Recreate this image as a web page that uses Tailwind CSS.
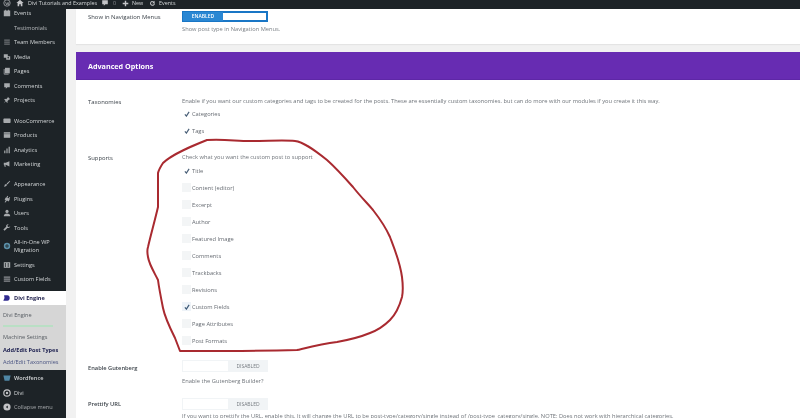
<!DOCTYPE html>
<html>
<head>
<meta charset="utf-8">
<script src="https://cdn.jsdelivr.net/npm/@tailwindcss/browser@4"></script>
</head>
<body class="m-0 bg-[#f1f1f1]">
<div class="relative w-[800px] h-[418px] overflow-hidden flex flex-col font-['Open_Sans',sans-serif] blur-[0.45px] bg-[#f1f1f1]">
  <!-- Top bar -->
  <header class="relative z-10 h-[9px] shrink-0 bg-[#1d2327] text-[#d5d8da] text-[5.4px] font-medium flex items-center pb-[3px] pl-[3px] overflow-hidden">
    <svg class="w-[8px] h-[8px] mr-[5px] shrink-0" viewBox="0 0 20 20"><circle cx="10" cy="10" r="8" fill="none" stroke="#a7aaad" stroke-width="2"/><path d="M6 7l3 8 2-6 2 6 2-8" fill="none" stroke="#a7aaad" stroke-width="1.6"/></svg>
    <svg class="w-[8px] h-[8px] mr-[4px] shrink-0" viewBox="0 0 20 20"><path d="M10 2L1 10h3v8h4v-5h4v5h4v-8h3z" fill="#c3c4c7"/></svg>
    <span class="w-[73px] shrink-0 whitespace-nowrap">Divi Tutorials and Examples</span>
    <svg class="w-[8px] h-[8px] mr-[4px] shrink-0" viewBox="0 0 20 20"><path d="M3 3h14v10h-6l-4 4v-4H3z" fill="#c3c4c7"/></svg>
    <span class="w-[9px] shrink-0 text-[#8c8f94]">0</span>
    <svg class="w-[7px] h-[7px] mr-[3px] shrink-0" viewBox="0 0 20 20"><path d="M8 2h4v6h6v4h-6v6H8v-6H2V8h6z" fill="#c3c4c7"/></svg>
    <span class="w-[17px] shrink-0">New</span>
    <svg class="w-[7px] h-[7px] mr-[3px] shrink-0" viewBox="0 0 20 20"><path d="M17 10a7 7 0 1 1-3-6l2-2v7h-7l3-3a4 4 0 1 0 2 4z" fill="#c3c4c7"/></svg>
    <span class="shrink-0">Events</span>
  </header>

  <div class="flex flex-1 min-h-0">
    <!-- Sidebar -->
    <aside class="relative w-[66px] shrink-0 bg-[#1d2327] text-[#d3d6d8] text-[5.6px] leading-[8px]">
      <div class="-mt-[3px] flex flex-col">
        <a class="h-[14.5px] flex items-center gap-[3px] pl-[3px]"><svg class="w-[8px] h-[8px]" viewBox="0 0 20 20"><path d="M2 4h16v14H2zM5 2h2v4H5zM13 2h2v4h-2z" fill="#a7aaad"/></svg><span>Events</span></a>
        <a class="h-[14.5px] flex items-center pl-[14px] text-[#b9bcbf]">Testimonials</a>
        <a class="h-[14.5px] flex items-center gap-[3px] pl-[3px]"><svg class="w-[8px] h-[8px]" viewBox="0 0 20 20"><path d="M3 4h14v3H3zM3 9h14v3H3zM3 14h14v3H3z" fill="#6d7175"/></svg><span>Team Members</span></a>
        <a class="h-[14.5px] flex items-center gap-[3px] pl-[3px]"><svg class="w-[8px] h-[8px]" viewBox="0 0 20 20"><path d="M2 3h10v9H2zM8 8h10v9H8z" fill="#a7aaad"/><circle cx="13" cy="12" r="2" fill="#1d2327"/></svg><span>Media</span></a>
        <a class="h-[14.5px] flex items-center gap-[3px] pl-[3px]"><svg class="w-[8px] h-[8px]" viewBox="0 0 20 20"><path d="M5 2h12v14H5z" fill="#a7aaad"/><path d="M3 5v13h11" fill="none" stroke="#a7aaad" stroke-width="2"/></svg><span>Pages</span></a>
        <a class="h-[14.5px] flex items-center gap-[3px] pl-[3px]"><svg class="w-[8px] h-[8px]" viewBox="0 0 20 20"><path d="M3 3h14v10h-6l-4 4v-4H3z" fill="#a7aaad"/></svg><span>Comments</span></a>
        <a class="h-[14.5px] flex items-center gap-[3px] pl-[3px]"><svg class="w-[8px] h-[8px]" viewBox="0 0 20 20"><path d="M12 2l6 6-3 1-4 4 1 3-2 1-3-4-5 5 4-6-3-3 2-2 3 1 4-4z" fill="#a7aaad"/></svg><span>Projects</span></a>

        <a class="mt-[6px] h-[14.5px] flex items-center gap-[3px] pl-[3px]"><svg class="w-[8px] h-[8px]" viewBox="0 0 20 20"><rect x="1" y="4" width="18" height="11" rx="2" fill="#a7aaad"/></svg><span>WooCommerce</span></a>
        <a class="h-[14.5px] flex items-center gap-[3px] pl-[3px]"><svg class="w-[8px] h-[8px]" viewBox="0 0 20 20"><path d="M2 3h16v14H2z" fill="#a7aaad"/><path d="M2 7h16" stroke="#1d2327"/></svg><span>Products</span></a>
        <a class="h-[14.5px] flex items-center gap-[3px] pl-[3px]"><svg class="w-[8px] h-[8px]" viewBox="0 0 20 20"><path d="M3 11h3v7H3zM8.500 6h3v12h-3zM14 2h3v16h-3z" fill="#a7aaad"/></svg><span>Analytics</span></a>
        <a class="h-[14.5px] flex items-center gap-[3px] pl-[3px]"><svg class="w-[8px] h-[8px]" viewBox="0 0 20 20"><path d="M2 7h5l9-4v13l-9-4H6l1 5H4l-1-5H2z" fill="#a7aaad"/></svg><span>Marketing</span></a>

        <a class="mt-[5.5px] h-[14.5px] flex items-center gap-[3px] pl-[3px]"><svg class="w-[8px] h-[8px]" viewBox="0 0 20 20"><path d="M17 2l1 1-7 8-2-2zM8 10l2 2c-1 4-5 5-8 5 2-1 2-3 2-4s2-3 4-3z" fill="#a7aaad"/></svg><span>Appearance</span></a>
        <a class="h-[14.5px] flex items-center gap-[3px] pl-[3px]"><svg class="w-[8px] h-[8px]" viewBox="0 0 20 20"><path d="M11 2l2 1-2 4 3 1 2-3 2 1-2 4 1 1-3 5-4-2-4 5-2-1 3-5-3-2 3-5 1 1z" fill="#a7aaad"/></svg><span>Plugins</span></a>
        <a class="h-[14.5px] flex items-center gap-[3px] pl-[3px]"><svg class="w-[8px] h-[8px]" viewBox="0 0 20 20"><circle cx="10" cy="6" r="4" fill="#a7aaad"/><path d="M2 18c0-5 3-7 8-7s8 2 8 7z" fill="#a7aaad"/></svg><span>Users</span></a>
        <a class="h-[14.5px] flex items-center gap-[3px] pl-[3px]"><svg class="w-[8px] h-[8px]" viewBox="0 0 20 20"><path d="M18 5l-3 3-3-1-1-3 3-3c-4-1-7 2-6 6l-7 7 3 3 7-7c4 1 7-2 7-5z" fill="#a7aaad"/></svg><span>Tools</span></a>
        <a class="h-[22px] flex items-center gap-[3px] pl-[3px]"><svg class="w-[8px] h-[8px] shrink-0" viewBox="0 0 20 20"><circle cx="10" cy="10" r="8" fill="#5b8fa8"/><path d="M5 10h10M10 5v10" stroke="#1d2327" stroke-width="2"/></svg><span>All-in-One WP<br>Migration</span></a>
        <a class="h-[15px] flex items-center gap-[3px] pl-[3px]"><svg class="w-[8px] h-[8px]" viewBox="0 0 20 20"><path d="M2 3h16v14H2z" fill="#a7aaad"/><path d="M6 5v10M13 5v10" stroke="#1d2327" stroke-width="2"/></svg><span>Settings</span></a>
        <a class="h-[14.500px] flex items-center gap-[3px] pl-[3px]"><svg class="w-[8px] h-[8px]" viewBox="0 0 20 20"><path d="M2 4h16v3H2zM2 9h16v3H2zM2 14h16v3H2z" fill="#8c8f94"/></svg><span>Custom Fields</span></a>

        <a class="mt-[4.5px] h-[14px] bg-white text-[#23244f] font-bold flex items-center gap-[3px] pl-[2px]"><svg class="w-[9px] h-[8px]" viewBox="0 0 20 20"><path d="M4 3h8c4 0 6 3 6 7s-2 7-6 7H2l3-7z" fill="#2f2a8f"/></svg><span>Divi Engine</span></a>
        <div class="h-[65px] bg-[#d6d6d6] text-[#555a60] flex flex-col pl-[3px]">
          <span class="mt-[6px] h-[8px]">Divi Engine</span>
          <span class="mt-[6px] h-[2px] w-[50px] bg-[#b9dfc4]"></span>
          <span class="mt-[6px] h-[8px]">Machine Settings</span>
          <span class="mt-[5px] h-[8px] font-bold text-[#1c1f4f]">Add/Edit Post Types</span>
          <span class="mt-[4px] h-[8px] text-[#4a5482]">Add/Edit Taxonomies</span>
        </div>
        <a class="mt-[1px] h-[14.5px] flex items-center gap-[3px] pl-[3px] font-semibold"><svg class="w-[8px] h-[8px]" viewBox="0 0 20 20"><path d="M1 4h18l-3 13H4z" fill="#4f87a6"/></svg><span>Wordfence</span></a>
        <a class="h-[14.5px] flex items-center gap-[3px] pl-[3px]"><svg class="w-[8px] h-[8px]" viewBox="0 0 20 20"><circle cx="10" cy="10" r="8" fill="none" stroke="#c3c4c7" stroke-width="3"/><circle cx="10" cy="10" r="3" fill="#c3c4c7"/></svg><span>Divi</span></a>
        <a class="h-[14.5px] flex items-center gap-[3px] pl-[3px] text-[#a7aaad]"><svg class="w-[8px] h-[8px]" viewBox="0 0 20 20"><circle cx="10" cy="10" r="9" fill="#c3c4c7"/><path d="M12 6l-5 4 5 4z" fill="#1d2327"/></svg><span>Collapse menu</span></a>
      </div>
    </aside>

    <!-- Main -->
    <main class="flex-1 min-w-0 pl-[10px] text-[#666b72] text-[5.72px] leading-[8px]">
      <section class="h-[35px] bg-white shadow-[0_1px_1px_rgba(0,0,0,0.05)] pl-[12px] grid grid-cols-[94px_1fr]">
        <div class="pt-[4px] text-[5.9px] text-[#3c434a]">Show in Navigation Menus</div>
        <div class="pt-[2px]">
          <div class="w-[86px] h-[11px] border border-[#1976c5] bg-white flex">
            <span class="w-[40px] bg-[#2a87d3] text-white text-[5px] font-semibold leading-[9px] text-center">ENABLED</span>
            <span class="flex-1 border-y border-r border-[#1976c5]"></span>
          </div>
          <p class="mt-[3px] text-[#7b8086]">Show post type in Navigation Menus.</p>
        </div>
      </section>

      <section class="mt-[8px] bg-white">
        <h2 class="h-[28px] bg-[#672cb2] border-b border-[#5e27a6] text-white text-[7.2px] font-bold flex items-center pl-[12px]">Advanced Options</h2>

        <div class="pl-[12px] grid grid-cols-[94px_1fr]">
          <div class="pt-[18px] text-[5.9px] text-[#3c434a]">Taxonomies</div>
          <div class="pt-[17px]">
            <p class="text-[#6f747a] whitespace-nowrap">Enable if you want our custom categories and tags to be created for the posts. These are essentially custom taxonomies. but can do more with our modules if you create it this way.</p>
            <div class="flex flex-col">
              <label class="h-[17px] flex items-center gap-[1px]"><span class="w-[9px] h-[9px] flex items-center justify-center"><svg class="w-[6px] h-[6px]" viewBox="0 0 20 20"><path d="M3 11l5 6L17 3" fill="none" stroke="#4a6078" stroke-width="4"/></svg></span>Categories</label>
              <label class="h-[17px] flex items-center gap-[1px]"><span class="w-[9px] h-[9px] flex items-center justify-center"><svg class="w-[6px] h-[6px]" viewBox="0 0 20 20"><path d="M3 11l5 6L17 3" fill="none" stroke="#4a6078" stroke-width="4"/></svg></span>Tags</label>
            </div>
          </div>

          <div class="pt-[15px] text-[5.9px] text-[#3c434a]">Supports</div>
          <div class="pt-[14px]">
            <p class="text-[#6f747a]">Check what you want the custom post to support</p>
            <div class="mt-[1px] flex flex-col">
              <label class="h-[17px] flex items-center gap-[1px]"><span class="w-[9px] h-[9px] flex items-center justify-center"><svg class="w-[6px] h-[6px]" viewBox="0 0 20 20"><path d="M3 11l5 6L17 3" fill="none" stroke="#4a6078" stroke-width="4"/></svg></span>Title</label>
              <label class="h-[17px] flex items-center gap-[1px]"><span class="w-[9px] h-[9px] bg-[#f3f5f6]"></span>Content (editor)</label>
              <label class="h-[17px] flex items-center gap-[1px]"><span class="w-[9px] h-[9px] bg-[#f3f5f6]"></span>Excerpt</label>
              <label class="h-[17px] flex items-center gap-[1px]"><span class="w-[9px] h-[9px] bg-[#f3f5f6]"></span>Author</label>
              <label class="h-[17px] flex items-center gap-[1px]"><span class="w-[9px] h-[9px] bg-[#f3f5f6]"></span>Featured Image</label>
              <label class="h-[17px] flex items-center gap-[1px]"><span class="w-[9px] h-[9px] bg-[#f3f5f6]"></span>Comments</label>
              <label class="h-[17px] flex items-center gap-[1px]"><span class="w-[9px] h-[9px] bg-[#f3f5f6]"></span>Trackbacks</label>
              <label class="h-[17px] flex items-center gap-[1px]"><span class="w-[9px] h-[9px] bg-[#f3f5f6]"></span>Revisions</label>
              <label class="h-[17px] flex items-center gap-[1px]"><span class="w-[9px] h-[9px] bg-[#eef3f8] flex items-center justify-center"><svg class="w-[6px] h-[6px]" viewBox="0 0 20 20"><path d="M3 11l5 6L17 3" fill="none" stroke="#3d5a78" stroke-width="4"/></svg></span>Custom Fields</label>
              <label class="h-[17px] flex items-center gap-[1px]"><span class="w-[9px] h-[9px] bg-[#f3f5f6]"></span>Page Attributes</label>
              <label class="h-[17px] flex items-center gap-[1px]"><span class="w-[9px] h-[9px] bg-[#f3f5f6]"></span>Post Formats</label>
            </div>
          </div>

          <div class="pt-[15px] font-semibold text-[#3c434a]">Enable Gutenberg</div>
          <div class="pt-[11px]">
            <div class="w-[86px] h-[12px] bg-[#f1f4f6] flex items-center"><span class="ml-[1px] w-[45px] h-[10px] bg-white"></span><span class="flex-1 text-center text-[5px] text-[#777c82]">DISABLED</span></div>
            <p class="mt-[5px] text-[#6f747a]">Enable the Gutenberg Builder?</p>
          </div>

          <div class="pt-[15px] font-semibold text-[#3c434a]">Prettify URL</div>
          <div class="pt-[13px]">
            <div class="w-[86px] h-[12px] bg-[#f1f4f6] flex items-center"><span class="ml-[1px] w-[45px] h-[10px] bg-white"></span><span class="flex-1 text-center text-[5px] text-[#777c82]">DISABLED</span></div>
            <p class="mt-[2px] text-[#6f747a] whitespace-nowrap">If you want to prettify the URL, enable this. It will change the URL to be post-type/category/single instead of /post-type_category/single. NOTE: Does not work with hierarchical categories.</p>
          </div>
        </div>
      </section>
    </main>
  </div>

  <!-- Hand-drawn annotation over the page -->
  <svg class="absolute left-0 top-0 w-[800px] h-[418px] pointer-events-none" viewBox="0 0 800 418"><path d="M163 163C172 154 192 146 207 140C225 139 236 141 250 141C268 141 285 140 295 141C303 142 312 148 327 160C336 168 345 178 353 187C360 196 368 204 373 210C380 219 386 228 390 237C395 250 400 262 402 277C403 285 403 292 402 297C399 308 396 314 390 320C384 326 378 330 370 333C358 338 348 340 337 342C322 344 310 347 297 350C260 351 220 351 180 351L175 338C170 328 165 318 163 308C161 298 159 288 158 280C154 272 149 264 148 257C147 252 147 250 148 247C151 234 155 220 158 207C158 196 158 184 158 173C159 169 161 166 163 163Z" fill="none" stroke="#a92a30" stroke-width="2" stroke-linejoin="round"/></svg>
</div>
</body>
</html>
